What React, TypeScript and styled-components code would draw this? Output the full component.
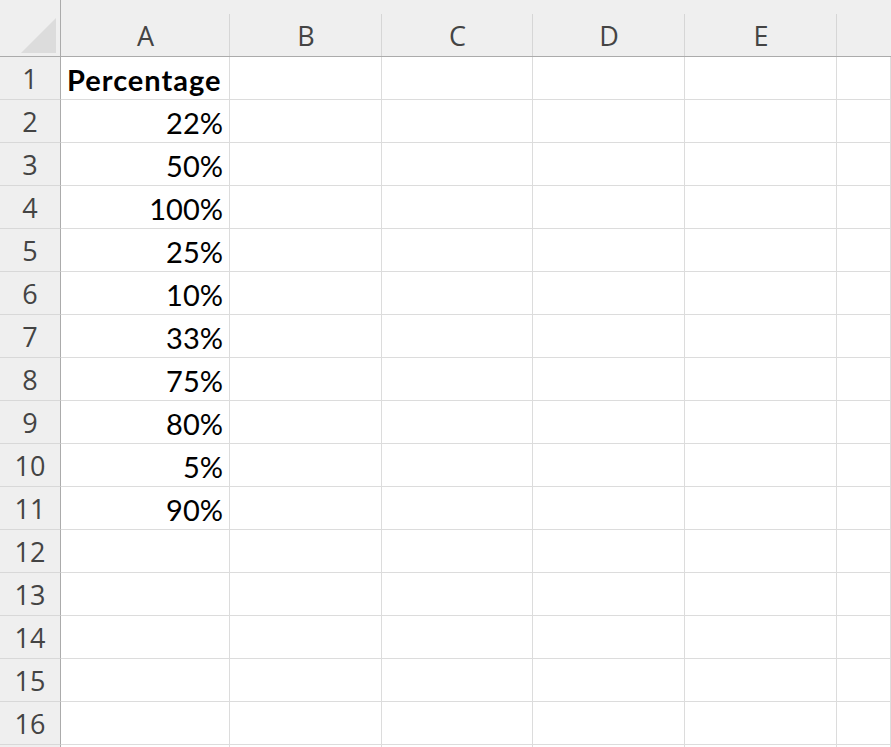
import React from "react";
import styled, { createGlobalStyle } from "styled-components";

const Global = createGlobalStyle`
  html, body { margin: 0; padding: 0; background: #ffffff; }
  body { overflow: hidden; }
`;

const COLS = ["A", "B", "C", "D", "E", ""];
const WIDTHS = "61px 169px 152px 151px 152px 152px 1fr";

const values: (string | null)[] = [
  "Percentage",
  "22%",
  "50%",
  "100%",
  "25%",
  "10%",
  "33%",
  "75%",
  "80%",
  "5%",
  "90%",
  null,
  null,
  null,
  null,
  null,
  null,
];

const Sheet = styled.div`
  display: grid;
  grid-template-columns: ${WIDTHS};
  grid-auto-rows: 43px;
  grid-template-rows: 57px;
  width: 100vw;
  height: 100vh;
  overflow: hidden;
  background: #ffffff;
`;

const Corner = styled.div`
  box-sizing: border-box;
  background: #efefef;
  border-bottom: 1px solid #ababab;
  border-right: 1px solid #ababab;
  display: flex;
  align-items: flex-end;
  justify-content: flex-end;
  padding: 0 3px 2px 0;
`;

const ColHeader = styled.div<{ $last?: boolean }>`
  box-sizing: border-box;
  background:
    ${(p) =>
      p.$last
        ? "none"
        : "linear-gradient(#d6d6d6, #d6d6d6) right bottom / 1px calc(100% - 14px) no-repeat"},
    #efefef;
  border-bottom: 1px solid #ababab;
  display: flex;
  align-items: flex-end;
  justify-content: center;
  padding-bottom: 0;
  font-family: "Open Sans", "Noto Sans", sans-serif;
  font-size: 27px;
  line-height: 40px;
  color: #444444;
`;

const RowHeader = styled.div`
  box-sizing: border-box;
  background: #efefef;
  border-right: 1px solid #ababab;
  border-bottom: 1px solid #d8d8d8;
  display: flex;
  align-items: center;
  justify-content: center;
  font-family: "Open Sans", "Noto Sans", sans-serif;
  font-size: 27px;
  color: #444444;
  padding-top: 1px;
`;

const Cell = styled.div<{ $bold?: boolean; $align?: "left" | "right" }>`
  box-sizing: border-box;
  border-right: 1px solid #dcdcdc;
  border-bottom: 1px solid #dcdcdc;
  display: flex;
  align-items: center;
  justify-content: ${(p) => (p.$align === "right" ? "flex-end" : "flex-start")};
  padding: 2px 6px 0 6px;
  font-family: "Lato", "Noto Sans", sans-serif;
  font-size: 29px;
  font-weight: ${(p) => (p.$bold ? 700 : 400)};
  letter-spacing: ${(p) => (p.$bold ? "1px" : "0")};
  color: #000000;
  white-space: nowrap;
  overflow: visible;
`;

const Triangle = () => (
  <svg width="36" height="36" viewBox="0 0 36 36">
    <polygon points="35,0 35,35 0,35" fill="#dcdcdc" />
  </svg>
);

export default function App() {
  return (
    <>
      <Global />
      <Sheet>
        <Corner>
          <Triangle />
        </Corner>
        {COLS.map((c, i) => (
          <ColHeader key={i} $last={i === COLS.length - 1}>
            {c}
          </ColHeader>
        ))}
        {values.map((v, r) => (
          <React.Fragment key={r}>
            <RowHeader>{r < 16 ? r + 1 : null}</RowHeader>
            <Cell $bold={r === 0} $align={r === 0 ? "left" : "right"}>
              {v}
            </Cell>
            {COLS.slice(1).map((_, ci) => (
              <Cell key={ci} />
            ))}
          </React.Fragment>
        ))}
      </Sheet>
    </>
  );
}
